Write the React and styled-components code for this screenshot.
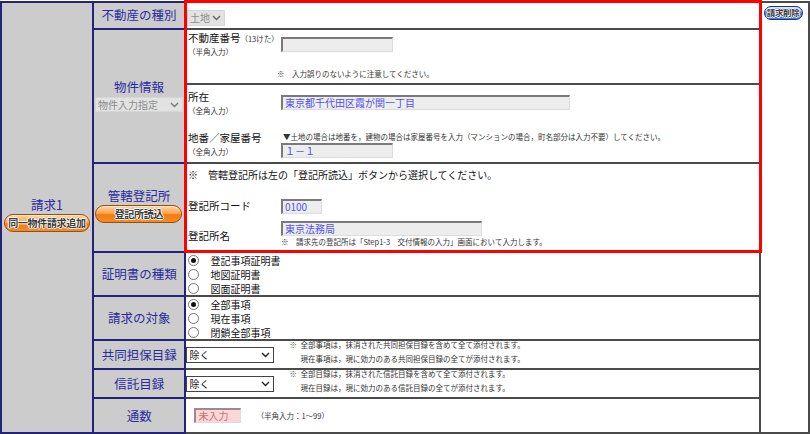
import React from "react";
import styled, { createGlobalStyle, css } from "styled-components";

const GlobalStyle = createGlobalStyle`
  body {
    margin: 0;
    background: #ffffff;
    font-family: "Noto Sans CJK JP", "Noto Sans", sans-serif;
    color: #222;
  }
`;

const Sheet = styled.table`
  border-collapse: collapse;
  table-layout: fixed;
`;

const Row = styled.tr`
  height: ${(p) => p.$h}px;
`;

const SideCell = styled.td`
  background: #cccccc;
  border: 2px solid #23237a;
  text-align: center;
  vertical-align: middle;
  padding: 0 0 5px;
`;

const HeadCell = styled.td`
  background: #cccccc;
  border: 2px solid #23237a;
  text-align: center;
  vertical-align: middle;
  padding: ${(p) => p.$pad || "0 1px"};
  color: #2b2b9e;
  font-size: 12.5px;
  line-height: 16px;
`;

const RightCell = styled.td`
  border: 2px solid #4a4a4a;
  vertical-align: top;
  padding: 3px 0 0 2px;
`;

const ContentCell = styled.td`
  border: 2px solid #4a4a4a;
  vertical-align: ${(p) => p.$valign || "top"};
  padding: ${(p) => p.$pad || "0"};
  ${(p) =>
    p.$red &&
    css`
      border-left: 3px solid #ff0000;
      border-right: 3px solid #ff0000;
    `}
  ${(p) => p.$redTop && css`border-top: 3px solid #ff0000;`}
  ${(p) => p.$redBottom && css`border-bottom: 3px solid #ff0000;`}
`;

const RequestTitle = styled.div`
  color: #2b2b9e;
  font-size: 12.5px;
  line-height: 16px;
  margin-bottom: 1px;
`;

const tones = {
  orange: css`
    background: linear-gradient(#ffd2a0 0%, #ffa552 45%, #f27c12 55%, #f58a26 100%);
    border: 1px solid #9a4d0c;
  `,
  blue: css`
    background: linear-gradient(#a9c8ff 0%, #5b8cf5 45%, #2f62dc 55%, #4a7ef0 100%);
    border: 1px solid #1b357f;
  `,
};

const PillButton = styled.button`
  ${(p) => tones[p.$tone]}
  width: ${(p) => p.$w}px;
  height: ${(p) => p.$h || 18}px;
  border-radius: 9px;
  padding: 0;
  font-family: inherit;
  font-size: ${(p) => p.$fs || 10}px;
  font-weight: bold;
  line-height: 1;
  color: #3a3a3a;
  letter-spacing: -0.3px;
  text-shadow: 1px 0 0 #fff, -1px 0 0 #fff, 0 1px 0 #fff, 0 -1px 0 #fff;
  box-shadow: inset 0 1px 1px rgba(255, 255, 255, 0.6);
  display: block;
  margin: ${(p) => p.$m || "0 auto"};
  white-space: nowrap;
`;

const SelectBox = styled.div`
  display: inline-flex;
  align-items: center;
  justify-content: space-between;
  box-sizing: border-box;
  width: ${(p) => p.$w}px;
  height: ${(p) => p.$h || 15}px;
  padding: 0 3px 0 2px;
  font-size: 10px;
  text-align: left;
  vertical-align: middle;
  ${(p) =>
    p.$disabled
      ? css`
          background: #e2e2e2;
          color: #8c8c8c;
          border: 1px solid #d6d6d6;
        `
      : css`
          background: #fff;
          color: #111;
          border: 1px solid #444;
        `}
  svg {
    flex: none;
  }
`;

const SubBlock = styled.div`
  height: ${(p) => p.$h}px;
  box-sizing: border-box;
  padding: ${(p) => p.$pad || "0"};
  ${(p) => p.$divider && css`border-bottom: 2px solid #4a4a4a;`}
`;

const FieldRow = styled.div`
  display: flex;
  align-items: flex-start;
  margin-top: ${(p) => p.$mt || 0}px;
`;

const LabelStack = styled.div`
  width: 93px;
  flex: none;
`;

const FieldLabel = styled.div`
  font-size: 10.5px;
  line-height: 14px;
  color: #111;
  white-space: nowrap;
  margin-top: ${(p) => p.$mt || 0}px;
`;

const Tiny = styled.span`
  font-size: 7.5px;
  line-height: 12px;
  color: #333;
  display: ${(p) => (p.$block ? "block" : "inline")};
  margin-top: ${(p) => p.$mt || 0}px;
  white-space: nowrap;
`;

const Field = styled.div`
  box-sizing: border-box;
  width: ${(p) => p.$w}px;
  height: 15px;
  margin-top: ${(p) => p.$mt || 0}px;
  border-top: 2px solid #7a7a7a;
  border-left: 2px solid #7a7a7a;
  border-right: 1px solid #dcdcdc;
  border-bottom: 1px solid #dcdcdc;
  background-color: #ededed;
  background-image: radial-gradient(#cfcfcf 0.55px, transparent 0.7px);
  background-size: 2px 2px;
  padding-left: 2px;
  font-size: 10px;
  line-height: 12px;
  color: ${(p) => (p.$pink ? "#c07474" : "#5252ee")};
  ${(p) =>
    p.$pink &&
    css`
      background: #ffd6d6;
      border-top-color: #9a8a8a;
      border-left-color: #9a8a8a;
    `}
  white-space: nowrap;
`;

const FieldColumn = styled.div`
  display: flex;
  flex-direction: column;
`;

const Note = styled.div`
  font-size: 7.5px;
  line-height: ${(p) => p.$lh || 12}px;
  color: #333;
  margin-left: ${(p) => p.$ml || 0}px;
  margin-top: ${(p) => p.$mt || 0}px;
  white-space: nowrap;
`;

const BigNote = styled.div`
  font-size: 10px;
  line-height: 14px;
  color: #111;
  margin-top: ${(p) => p.$mt || 0}px;
  white-space: nowrap;
`;

const RadioList = styled.div`
  display: flex;
  flex-direction: column;
  padding: 0 0 0 2px;
`;

const RadioItem = styled.label`
  display: flex;
  align-items: center;
  height: 14px;
  font-size: 10px;
  color: #111;
`;

const RadioDot = styled.span`
  width: 9px;
  height: 9px;
  border-radius: 50%;
  border: 1px solid #777;
  background: #fff;
  margin-right: 11px;
  display: inline-flex;
  align-items: center;
  justify-content: center;
  &::after {
    content: "";
    width: 5px;
    height: 5px;
    border-radius: 50%;
    background: ${(p) => (p.$on ? "#111" : "transparent")};
  }
`;

const InlineRow = styled.div`
  display: flex;
  align-items: center;
  padding-left: ${(p) => p.$pl || 0}px;
`;

const NoteBlock = styled.div`
  display: flex;
  margin-left: ${(p) => p.$ml || 0}px;
  margin-top: ${(p) => p.$mt || 0}px;
`;

const NoteMark = styled.div`
  font-size: 7.5px;
  line-height: 14px;
  color: #555;
  width: 11px;
`;

const Chevron = ({ color = "#222" }) => (
  <svg width="9" height="6" viewBox="0 0 9 6">
    <path d="M1 1 L4.5 4.5 L8 1" fill="none" stroke={color} strokeWidth="1.4" />
  </svg>
);

const RadioGroup = ({ items }) => (
  <RadioList>
    {items.map((t, i) => (
      <RadioItem key={t}>
        <RadioDot $on={i === 0} />
        {t}
      </RadioItem>
    ))}
  </RadioList>
);

const CatalogRow = ({ lines }) => (
  <InlineRow>
    <SelectBox $w={88} $h={16}>
      除く
      <Chevron />
    </SelectBox>
    <NoteBlock $ml={15} $mt={-6}>
      <NoteMark>※</NoteMark>
      <div>
        {lines.map((l) => (
          <Note key={l} $lh={14}>
            {l}
          </Note>
        ))}
      </div>
    </NoteBlock>
  </InlineRow>
);

export default function App() {
  return (
    <>
      <GlobalStyle />
      <Sheet>
        <colgroup>
          <col style={{ width: 92 }} />
          <col style={{ width: 89 }} />
          <col style={{ width: 577 }} />
          <col style={{ width: 49 }} />
        </colgroup>
        <tbody>
          <Row $h={27}>
            <SideCell rowSpan={8}>
              <RequestTitle>請求1</RequestTitle>
              <PillButton $tone="orange" $w={86}>
                同一物件請求追加
              </PillButton>
            </SideCell>
            <HeadCell>不動産の種別</HeadCell>
            <ContentCell $red $redTop $valign="middle">
              <SelectBox $disabled $w={38} $h={16}>
                土地
                <Chevron color="#666" />
              </SelectBox>
            </ContentCell>
            <RightCell rowSpan={8}>
              <PillButton $tone="blue" $w={39} $h={14} $fs={8.5} $m="0">
                請求削除
              </PillButton>
            </RightCell>
          </Row>
          <Row $h={134}>
            <HeadCell>
              物件情報
              <SelectBox $disabled $w={88} $h={15}>
                物件入力指定
                <Chevron color="#777" />
              </SelectBox>
            </HeadCell>
            <ContentCell $red>
              <SubBlock $h={55} $divider $pad="1px 0 0 1px">
                <FieldRow>
                  <LabelStack>
                    <FieldLabel>
                      不動産番号<Tiny>（13けた）</Tiny>
                    </FieldLabel>
                    <Tiny $block $mt={1}>（半角入力）</Tiny>
                  </LabelStack>
                  <Field $w={112} $mt={6} />
                </FieldRow>
                <Note $ml={89} $mt={10}>※　入力誤りのないように注意してください。</Note>
              </SubBlock>
              <SubBlock $h={76} $pad="5px 0 0 1px">
                <FieldRow>
                  <LabelStack>
                    <FieldLabel>所在</FieldLabel>
                    <Tiny $block $mt={1}>（全角入力）</Tiny>
                  </LabelStack>
                  <Field $w={289} $mt={5}>東京都千代田区霞が関一丁目</Field>
                </FieldRow>
                <FieldRow $mt={14}>
                  <LabelStack>
                    <FieldLabel>地番／家屋番号</FieldLabel>
                    <Tiny $block $mt={1}>（全角入力）</Tiny>
                  </LabelStack>
                  <FieldColumn>
                    <Note $ml={2}>
                      ▼土地の場合は地番を，建物の場合は家屋番号を入力（マンションの場合，町名部分は入力不要）してください。
                    </Note>
                    <Field $w={112}>１－１</Field>
                  </FieldColumn>
                </FieldRow>
              </SubBlock>
            </ContentCell>
          </Row>
          <Row $h={89}>
            <HeadCell $pad="0 1px 3px">
              管轄登記所
              <PillButton $tone="orange" $w={87} $m="1px auto 0">
                登記所読込
              </PillButton>
            </HeadCell>
            <ContentCell $red $redBottom $pad="0 0 0 1px">
              <BigNote $mt={4}>※　管轄登記所は左の「登記所読込」ボタンから選択してください。</BigNote>
              <FieldRow $mt={17}>
                <LabelStack>
                  <FieldLabel>登記所コード</FieldLabel>
                </LabelStack>
                <Field $w={41}>0100</Field>
              </FieldRow>
              <FieldRow $mt={7}>
                <LabelStack>
                  <FieldLabel $mt={8}>登記所名</FieldLabel>
                </LabelStack>
                <FieldColumn>
                  <Field $w={201}>東京法務局</Field>
                  <Note>※　請求先の登記所は「Step1-3　交付情報の入力」画面において入力します。</Note>
                </FieldColumn>
              </FieldRow>
            </ContentCell>
          </Row>
          <Row $h={44}>
            <HeadCell>証明書の種類</HeadCell>
            <ContentCell>
              <RadioGroup items={["登記事項証明書", "地図証明書", "図面証明書"]} />
            </ContentCell>
          </Row>
          <Row $h={43}>
            <HeadCell>請求の対象</HeadCell>
            <ContentCell>
              <RadioGroup items={["全部事項", "現在事項", "閉鎖全部事項"]} />
            </ContentCell>
          </Row>
          <Row $h={29}>
            <HeadCell>共同担保目録</HeadCell>
            <ContentCell $valign="middle">
              <CatalogRow
                lines={[
                  "全部事項は，抹消された共同担保目録を含めて全て添付されます。",
                  "現在事項は，現に効力のある共同担保目録の全てが添付されます。",
                ]}
              />
            </ContentCell>
          </Row>
          <Row $h={29}>
            <HeadCell>信託目録</HeadCell>
            <ContentCell $valign="middle">
              <CatalogRow
                lines={[
                  "全部目録は，抹消された信託目録を含めて全て添付されます。",
                  "現在目録は，現に効力のある信託目録の全てが添付されます。",
                ]}
              />
            </ContentCell>
          </Row>
          <Row $h={35}>
            <HeadCell>通数</HeadCell>
            <ContentCell $valign="middle">
              <InlineRow $pl={8}>
                <Field $w={47} $pink>
                  未入力
                </Field>
                <Note $ml={15}>（半角入力：1～99）</Note>
              </InlineRow>
            </ContentCell>
          </Row>
        </tbody>
      </Sheet>
    </>
  );
}
